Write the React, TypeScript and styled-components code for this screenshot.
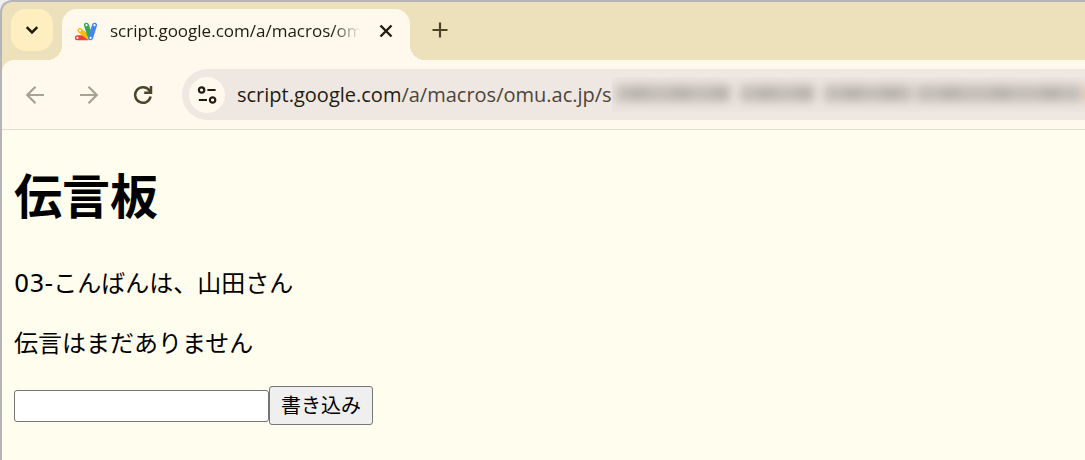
import React from "react";
import styled, { createGlobalStyle } from "styled-components";

const uiFont = `"Open Sans", "Noto Sans", sans-serif`;
const pageFont = `"DejaVu Sans", "Noto Sans CJK JP", sans-serif`;

const GlobalStyle = createGlobalStyle`
  *, *::before, *::after { box-sizing: border-box; }
  body { margin: 0; background: #eeeeee; }
`;

const BrowserWindow = styled.div`
  display: flex;
  flex-direction: column;
  min-height: 100vh;
  overflow: hidden;
  border: solid #b5b4b8;
  border-width: 2px 0 0 2px;
  border-top-left-radius: 12px;
  background: #ede1bb;
`;

const TabStrip = styled.div`
  display: flex;
  align-items: flex-start;
  height: 58px;
  padding: 7px 0 0 9px;
`;

const IconButton = styled.button<{ $color?: string }>`
  display: flex;
  align-items: center;
  justify-content: center;
  flex: none;
  width: 30px;
  height: 30px;
  padding: 0;
  border: 0;
  border-radius: 50%;
  background: transparent;
  color: ${(p) => p.$color ?? "#1f1c13"};
`;

const TabSearchButton = styled(IconButton)`
  width: 42px;
  height: 42px;
  border-radius: 15px;
  background: #ffefc0;
`;

const NewTabButton = styled(IconButton)`
  height: 42px;
  color: #4c4529;
`;

const Tab = styled.div`
  position: relative;
  display: flex;
  align-items: center;
  width: 348px;
  height: 51px;
  margin: 0 15px 0 9px;
  padding: 0 9px 8px 12px;
  border-radius: 15px 15px 0 0;
  background: #fff8ec;

  &::before,
  &::after {
    content: "";
    position: absolute;
    bottom: 0;
    width: 15px;
    height: 15px;
  }
  &::before {
    right: 100%;
    background: radial-gradient(circle at 0 0, transparent 15px, #fff8ec 15px);
  }
  &::after {
    left: 100%;
    background: radial-gradient(circle at 100% 0, transparent 15px, #fff8ec 15px);
  }
`;

const TabTitle = styled.span`
  flex: 1;
  min-width: 0;
  margin: 0 11px 0 12px;
  overflow: hidden;
  white-space: nowrap;
  font: 17px/24px ${uiFont};
  color: #1f1c13;
  mask-image: linear-gradient(to right, #000 calc(100% - 28px), transparent);
`;

const Toolbar = styled.div`
  display: flex;
  align-items: center;
  gap: 24px;
  height: 70px;
  padding-left: 18px;
  border-bottom: 1px solid #e2ddd0;
  border-top-left-radius: 12px;
  background: #fff8ec;
`;

const AddressBar = styled.div`
  display: flex;
  align-items: center;
  flex: 1;
  min-width: 0;
  height: 51px;
  padding-left: 7px;
  border-radius: 26px 0 0 26px;
  background: #efe7e1;
`;

const SiteInfoButton = styled(IconButton)`
  width: 36px;
  height: 36px;
  background: #fff8ec;
`;

const Address = styled.span`
  flex: none;
  margin-left: 12px;
  font: 20px/28px ${uiFont};
  color: #4c463a;
`;

const Host = styled.span`
  color: #1f1c13;
`;

const Redaction = styled.svg`
  flex: 1;
  min-width: 0;
  height: 35px;
  overflow: hidden;
`;

const Page = styled.main`
  flex: 1;
  padding: 0 12px;
  background: #fffdee;
  color: #000;
  font: 24px/36px ${pageFont};
`;

const Heading = styled.h1`
  margin: 32px 0 34px;
  font: bold 48px/70px ${pageFont};
`;

const Message = styled.p`
  margin: 0 0 24px;
`;

const Form = styled.form`
  display: flex;
  align-items: center;
`;

const TextInput = styled.input`
  width: 255px;
  height: 32px;
  padding: 2px 4px;
  border: 1px solid #767676;
  border-radius: 3px;
  background: #fff;
  font: 20px/24px ${pageFont};
`;

const SubmitButton = styled.button`
  height: 39px;
  padding: 0 11px;
  border: 1px solid #767676;
  border-radius: 3px;
  background: #efefef;
  color: #000;
  font: 20px/30px ${pageFont};
`;

const AppsScriptLogo = () => (
  <svg width="24" height="20" viewBox="0 0 24 20" aria-hidden="true">
    <g strokeLinecap="round" strokeWidth="5">
      <path d="M3.4 16.8H14" stroke="#ea4335" />
      <path d="M6 9.6L14.6 16.4" stroke="#fbbc04" />
      <path d="M12.5 4.2L15.6 14" stroke="#34a853" />
      <path d="M20.5 4.2L16.6 16.8" stroke="#4285f4" />
    </g>
    <g fill="#fff">
      <circle cx="3.4" cy="16.8" r="1.1" />
      <circle cx="6" cy="9.6" r="1.1" />
      <circle cx="12.5" cy="4.2" r="1.1" />
      <circle cx="20.5" cy="4.2" r="1.1" />
      <circle cx="16.6" cy="16.8" r="1.1" />
    </g>
  </svg>
);

type StrokeIconProps = { d: string; size: number; width: number };

const StrokeIcon = ({ d, size, width }: StrokeIconProps) => (
  <svg
    width={size}
    height={size}
    viewBox={`0 0 ${size} ${size}`}
    fill="none"
    stroke="currentColor"
    strokeWidth={width}
    aria-hidden="true"
  >
    <path d={d} />
  </svg>
);

const smudges = [
  [4, 118], [128, 202], [212, 300], [304, 470],
];

export default function App() {
  return (
    <>
      <GlobalStyle />
      <BrowserWindow>
        <TabStrip>
          <TabSearchButton type="button" aria-label="タブを検索">
            <StrokeIcon size={14} width={2.6} d="M1.7 4.2L7 9.5L12.3 4.2" />
          </TabSearchButton>
          <Tab>
            <AppsScriptLogo />
            <TabTitle>script.google.com/a/macros/om</TabTitle>
            <IconButton type="button" aria-label="タブを閉じる">
              <StrokeIcon size={14} width={2.4} d="M1.5 1.5L12.5 12.5M12.5 1.5L1.5 12.5" />
            </IconButton>
          </Tab>
          <NewTabButton type="button" aria-label="新しいタブ">
            <StrokeIcon size={16} width={2.2} d="M8 0.5V15.5M0.5 8H15.5" />
          </NewTabButton>
        </TabStrip>

        <Toolbar>
          <IconButton type="button" aria-label="戻る" $color="#a8a294">
            <StrokeIcon size={20} width={2.2} d="M19 10H2.5M10.5 1.7L2.2 10L10.5 18.3" />
          </IconButton>
          <IconButton type="button" aria-label="進む" $color="#a8a294">
            <StrokeIcon size={20} width={2.2} d="M1 10H17.5M9.5 1.7L17.8 10L9.5 18.3" />
          </IconButton>
          <IconButton type="button" aria-label="再読み込み" $color="#4c4529">
            <StrokeIcon
              size={20}
              width={2.5}
              d="M17.6 11.6A7.8 7.8 0 1 1 16.4 5.6L17.8 7.5M18 1V7.7H11.2"
            />
          </IconButton>
          <AddressBar>
            <SiteInfoButton type="button" aria-label="サイト情報">
              <StrokeIcon
                size={20}
                width={2.2}
                d="M7.3 5A2.7 2.7 0 1 1 1.9 5A2.7 2.7 0 1 1 7.3 5ZM10.4 5H18.6M18.3 15A2.7 2.7 0 1 1 12.9 15A2.7 2.7 0 1 1 18.3 15ZM1.8 15H10"
              />
            </SiteInfoButton>
            <Address>
              <Host>script.google.com</Host>/a/macros/omu.ac.jp/s
            </Address>
            <Redaction aria-hidden="true">
              <defs>
                <filter id="soften" x="-10%" y="-100%" width="120%" height="300%">
                  <feGaussianBlur stdDeviation="5" />
                </filter>
              </defs>
              <rect width="100%" height="35" fill="#e9e2dc" opacity="0.6" />
              <g filter="url(#soften)">
                {smudges.map(([from, to]) => (
                  <rect key={from} x={from} y="8" width={to - from} height="17" fill="#c3beb8" />
                ))}
                {[18, 60, 100, 146, 184, 232, 270, 330, 380, 430].map((x) => (
                  <rect key={x} x={x} y="9" width="18" height="14" fill="#b9b4ae" />
                ))}
                <rect x="474" y="9" width="12" height="16" fill="#ecc29a" />
              </g>
            </Redaction>
          </AddressBar>
        </Toolbar>

        <Page>
          <Heading>伝言板</Heading>
          <Message>03-こんばんは、山田さん</Message>
          <Message>伝言はまだありません</Message>
          <Form onSubmit={(event) => event.preventDefault()}>
            <TextInput type="text" aria-label="伝言" />
            <SubmitButton type="submit">書き込み</SubmitButton>
          </Form>
        </Page>
      </BrowserWindow>
    </>
  );
}
